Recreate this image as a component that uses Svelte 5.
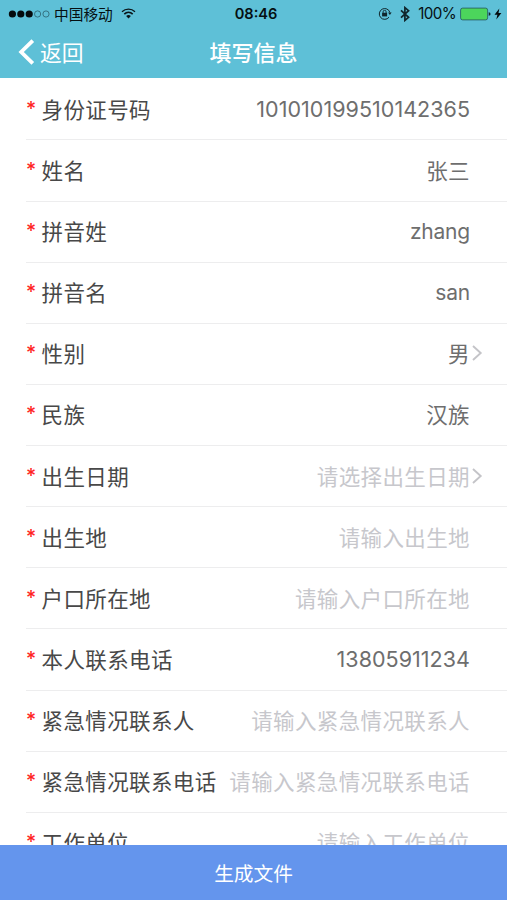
<script>
  // Form rows, in display order
  const fields = [
    { label: "身份证号码", value: "101010199510142365", type: "digits" },
    { label: "姓名", value: "张三" },
    { label: "拼音姓", value: "zhang", type: "latin" },
    { label: "拼音名", value: "san", type: "latin" },
    { label: "性别", value: "男", arrow: true },
    { label: "民族", value: "汉族" },
    { label: "出生日期", placeholder: "请选择出生日期", arrow: true },
    { label: "出生地", placeholder: "请输入出生地" },
    { label: "户口所在地", placeholder: "请输入户口所在地" },
    { label: "本人联系电话", value: "13805911234", type: "digits" },
    { label: "紧急情况联系人", placeholder: "请输入紧急情况联系人" },
    { label: "紧急情况联系电话", placeholder: "请输入紧急情况联系电话" },
    { label: "工作单位", placeholder: "请输入工作单位" },
  ];

  const signal = [true, true, true, false, false];
</script>

<main class="screen">
  <header class="header">
    <div class="status">
      <div class="status-left">
        <svg class="signal" width="43" height="10" viewBox="0 0 43 10">
          {#each signal as on, i}
            <circle cx={4.4 + i * 8.4} cy="5" r={on ? 3.6 : 3.1} fill={on ? "#050b0d" : "none"} stroke={on ? "none" : "#2b5f6c"} stroke-width="0.8" />
          {/each}
        </svg>
        <span class="carrier">中国移动</span>
        <svg class="wifi" width="15" height="11" viewBox="0 0 15 11" fill="none" stroke="#0a1519">
          <path d="M1 3.7C4.7.2 10.3.2 14 3.7" stroke-width="1.3" />
          <path d="M3.3 6.1C5.7 3.9 9.3 3.9 11.7 6.1" stroke-width="1.7" />
          <path d="M7.5 10.6L5.1 8.1Q7.5 6.1 9.9 8.1Z" fill="#0a1519" stroke="none" />
        </svg>
      </div>
      <span class="time">08:46</span>
      <div class="status-right">
        <svg width="14" height="13" viewBox="0 0 14 13" fill="none" stroke="#10262c">
          <path d="M11 10.2A5.4 5.4 0 1 1 11.9 5.5" stroke-width="1" />
          <path d="M10.1 5.5h3.5l-1.7 2.4z" fill="#10262c" stroke="none" />
          <rect x="4.1" y="5.8" width="5" height="3.6" fill="#10262c" stroke="none" />
          <path d="M5.1 6V4.8a1.5 1.5 0 0 1 3 0V6" stroke-width="0.9" />
        </svg>
        <svg class="bluetooth" width="10" height="16" viewBox="0 0 10 16" fill="none" stroke="#10262c" stroke-width="1.7">
          <path d="M1 4.3L8.6 11.3L4.9 14.4V1.6L8.6 4.7L1 11.7" />
        </svg>
        <span class="percent">100%</span>
        <svg class="battery" width="31" height="14" viewBox="0 0 31 14">
          <rect x="0.6" y="1.1" width="27" height="11.8" rx="2" fill="#4cd55c" stroke="#23545f" stroke-width="0.8" />
          <path d="M28.7 5.2Q30.6 5.4 30.6 7T28.7 8.8Z" fill="#10262c" />
        </svg>
        <svg class="bolt" width="8" height="12" viewBox="0 0 8 12">
          <path d="M5.3.5L.5 6.8H3.4L2.3 11.4L7.4 5H4.5Z" fill="#050b0d" />
        </svg>
      </div>
    </div>
    <nav class="nav">
      <button class="back">
        <svg width="17" height="26" viewBox="0 0 17 26" fill="none" stroke="#fff" stroke-width="3.8">
          <path d="M14.8 1.7L3.2 13L14.8 24.3" />
        </svg>
        <span>返回</span>
      </button>
      <h1>填写信息</h1>
    </nav>
  </header>

  <section class="form">
    {#each fields as field}
      <div class="row">
        <span class="required">*</span>
        <span class="label">{field.label}</span>
        <span class="value {field.type ?? ''}" class:placeholder={!field.value}>{field.value ?? field.placeholder}</span>
        <span class="more">
          {#if field.arrow}
            <svg width="12" height="18" viewBox="0 0 12 18" fill="none" stroke="#c4c4c8" stroke-width="1.9">
              <path d="M2 2L9.7 9L2 16" />
            </svg>
          {/if}
        </span>
      </div>
    {/each}
  </section>

  <button class="submit">生成文件</button>
</main>

<style>
  :global(body) {
    margin: 0;
    background: #fff;
  }

  .screen {
    display: flex;
    flex-direction: column;
    height: 100vh;
    overflow: hidden;
    font-family: Inter, "Noto Sans CJK SC", sans-serif;
  }

  svg {
    display: block;
    flex: none;
  }

  button {
    padding: 0;
    border: none;
    background: none;
    font: inherit;
    color: #fff;
    cursor: pointer;
  }

  .header {
    flex: none;
    height: 78.3px;
    background: #5ec0d7;
  }

  .status {
    display: grid;
    grid-template-columns: 1fr auto 1fr;
    align-items: center;
    height: 27px;
    padding: 0 5px 0 8px;
    font-size: 15px;
    line-height: 27px;
    color: #050f12;
  }

  .status-left,
  .status-right {
    display: flex;
    align-items: center;
  }

  .status-right {
    justify-content: flex-end;
  }

  .carrier {
    margin-left: 3px;
    padding-top: 3px;
    font-size: 14.7px;
    line-height: 24px;
  }

  .wifi {
    margin-left: 8px;
  }

  .time {
    padding: 2px 0 0 2px;
    font-size: 14.6px;
    font-weight: 600;
    line-height: 25px;
  }

  .bluetooth {
    margin-left: 8px;
  }

  .percent {
    margin-left: 8px;
    font-size: 15.2px;
    letter-spacing: -0.6px;
  }

  .battery {
    margin-left: 4px;
  }

  .bolt {
    margin-left: 3px;
  }

  .nav {
    display: grid;
    grid-template-columns: 1fr auto 1fr;
    align-items: center;
    height: 50px;
    padding: 0 18px;
  }

  .back {
    display: flex;
    align-items: center;
    gap: 5px;
    font-size: 21.8px;
  }

  .back span,
  h1 {
    padding-bottom: 2px;
  }

  h1 {
    margin: 0;
    color: #fff;
    font-size: 22px;
    font-weight: 500;
  }

  .form {
    flex: 1;
    min-height: 0;
    overflow: hidden;
    padding: 1px 0 0 26px;
  }

  .row {
    display: flex;
    align-items: center;
    box-sizing: border-box;
    height: 61.13px;
    padding-bottom: 2px;
    border-bottom: 1.5px solid #ededee;
    font-size: 21.5px;
    letter-spacing: 0.38px;
  }

  .required {
    width: 15.5px;
    padding-top: 1px;
    color: #f22;
    font-size: 19.5px;
    font-weight: 500;
  }

  .label {
    color: #484848;
  }

  .value {
    margin-left: auto;
    color: #6e6e6e;
  }

  .digits {
    padding-top: 2px;
    letter-spacing: 0.03px;
  }

  .latin {
    padding-top: 2px;
    font-size: 21px;
    letter-spacing: -0.2px;
  }

  .placeholder {
    color: #c7c7cc;
  }

  .more {
    box-sizing: border-box;
    width: 37px;
    padding: 1px 0 0 1px;
  }

  .submit {
    flex: none;
    height: 55px;
    background: #6495ed;
    font-size: 19.7px;
  }
</style>
